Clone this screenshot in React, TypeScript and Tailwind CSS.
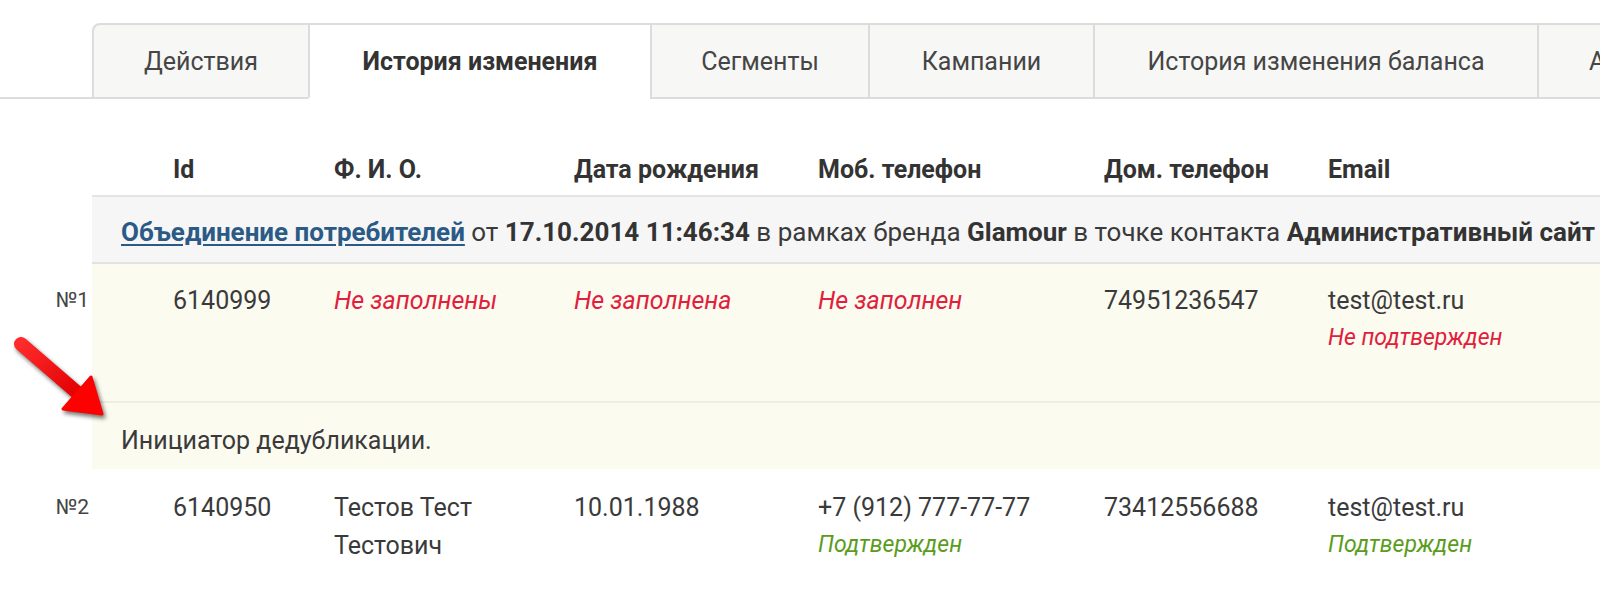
import React from "react";

const tabs = [
  { label: "Действия", w: "w-[216px]" },
  { label: "История изменения", w: "w-[342px]", active: true },
  { label: "Сегменты", w: "w-[218px]" },
  { label: "Кампании", w: "w-[225px]" },
  { label: "История изменения баланса", w: "w-[444px]" },
];

const Red = ({ children }: { children: React.ReactNode }) => (
  <span className="italic text-[#e0203c]">{children}</span>
);

function Arrow() {
  return (
    <svg
      className="absolute left-0 top-[320px] drop-shadow-[2px_3px_2px_rgba(0,0,0,0.55)]"
      width="140"
      height="120"
      viewBox="0 0 140 120"
    >
      <defs>
        <linearGradient id="ag" x1="0" y1="0" x2="1" y2="1">
          <stop offset="0" stopColor="#ff2a2a" />
          <stop offset="1" stopColor="#e00000" />
        </linearGradient>
      </defs>
      <line x1="21" y1="24" x2="80" y2="75" stroke="url(#ag)" strokeWidth="14" strokeLinecap="round" />
      <polygon points="102,94 63,89 91,57" fill="#f00" stroke="#f00" strokeWidth="3" strokeLinejoin="round" />
    </svg>
  );
}

export default function App() {
  const cols = "grid grid-cols-[161px_240px_244px_286px_224px_1fr] pl-[81px]";
  return (
    <div className="relative w-[1600px] h-[598px] overflow-hidden bg-white font-['Roboto',sans-serif] text-[25px] leading-[37px] text-[#3a3a3a]">
      {/* Tabs */}
      <div className="flex pt-[23px] border-b-2 border-[#dcdcdc]">
        <div className="w-[92px] shrink-0" />
        {tabs.map((t, i) => (
          <div
            key={t.label}
            className={`${t.w} shrink-0 h-[76px] -mb-[2px] flex items-center justify-center border-t-2 border-l-2 border-b-2 border-[#dcdcdc] whitespace-nowrap ${
              i === 0 ? "rounded-tl-[8px]" : ""
            } ${t.active ? "bg-white border-b-white font-bold text-[#333]" : "bg-[#f7f7f5] text-[#454545]"}`}
          >
            {t.label}
          </div>
        ))}
        <div className="w-[200px] shrink-0 h-[76px] -mb-[2px] flex items-center pl-[50px] border-t-2 border-l-2 border-b-2 border-[#dcdcdc] bg-[#f7f7f5] text-[#454545] whitespace-nowrap">
          Анкета
        </div>
      </div>

      {/* Table */}
      <div className="flex">
        <div className="w-[92px] shrink-0" />
        <div className="flex-1 min-w-0">
          <div className={`${cols} h-[98px] items-end pb-[7px] border-b-2 border-[#e4e4e4] font-bold text-[#333]`}>
            <div>Id</div>
            <div>Ф. И. О.</div>
            <div>Дата рождения</div>
            <div>Моб. телефон</div>
            <div>Дом. телефон</div>
            <div>Email</div>
          </div>
          <div className="h-[67px] pt-[17px] pl-[29px] bg-[#f6f6f6] border-b-2 border-[#e2e2e2] whitespace-nowrap text-[26px]">
            <a href="#" className="font-bold text-[#2b5a87] underline underline-offset-[3px]">
              Объединение потребителей
            </a>{" "}
            от <b className="text-[#333]">17.10.2014 11:46:34</b> в рамках бренда{" "}
            <b className="text-[#333]">Glamour</b> в точке контакта{" "}
            <b className="text-[#333]">Административный сайт</b>
          </div>
        </div>
      </div>

      {/* Row 1 */}
      <div className="flex">
        <div className="w-[92px] shrink-0 pt-[18px] pr-[3px] text-right text-[21px] text-[#444]">№1</div>
        <div className="flex-1 min-w-0 bg-[#fcfbf0]">
          <div className={`${cols} h-[139px] pt-[18px] border-b-2 border-[#efeee2]`}>
            <div>6140999</div>
            <div><Red>Не заполнены</Red></div>
            <div><Red>Не заполнена</Red></div>
            <div><Red>Не заполнен</Red></div>
            <div>74951236547</div>
            <div>
              <div>test@test.ru</div>
              <div className="text-[23px]"><Red>Не подтвержден</Red></div>
            </div>
          </div>
          <div className="h-[66px] pt-[19px] pl-[29px]">Инициатор дедубликации.</div>
        </div>
      </div>

      {/* Row 2 */}
      <div className="flex">
        <div className="w-[92px] shrink-0 pt-[20px] pr-[3px] text-right text-[21px] text-[#444]">№2</div>
        <div className={`flex-1 min-w-0 ${cols} pt-[20px]`}>
          <div>6140950</div>
          <div className="leading-[38px]">
            Тестов Тест
            <br />
            Тестович
          </div>
          <div>10.01.1988</div>
          <div>
            <div>+7 (912) 777-77-77</div>
            <div className="text-[23px] italic text-[#5a9c1c]">Подтвержден</div>
          </div>
          <div>73412556688</div>
          <div>
            <div>test@test.ru</div>
            <div className="text-[23px] italic text-[#5a9c1c]">Подтвержден</div>
          </div>
        </div>
      </div>

      <Arrow />
    </div>
  );
}
